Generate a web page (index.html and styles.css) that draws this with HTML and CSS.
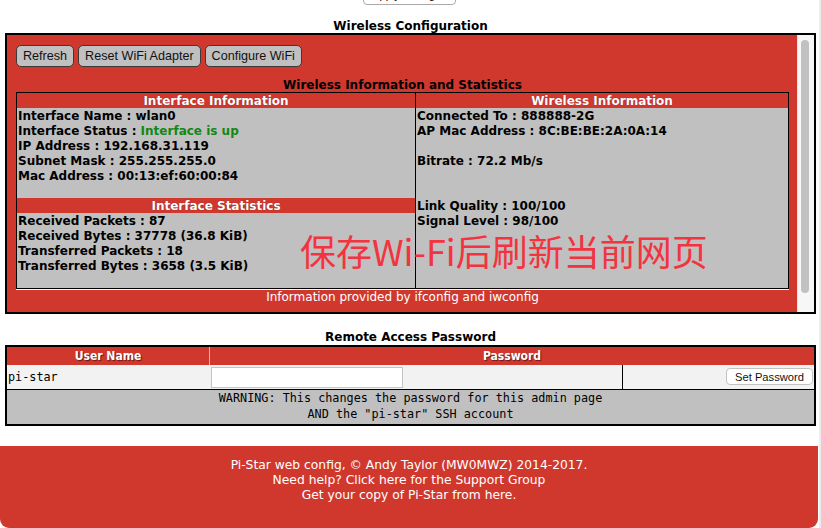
FILE: index.html
```html
<!DOCTYPE html>
<html lang="en">
<head>
<meta charset="utf-8">
<title>Pi-Star Wireless Configuration</title>
<link rel="stylesheet" href="styles.css">
</head>
<body>
<div class="page">
  <div class="apply-wrap"><button class="apply">Apply Changes</button></div>
  <h2 class="section-title">Wireless Configuration</h2>
  <div class="frame">
    <div class="frame-body">
      <div class="btn-row">
        <button class="gbtn">Refresh</button>
        <button class="gbtn">Reset WiFi Adapter</button>
        <button class="gbtn">Configure WiFi</button>
      </div>
      <div class="info-title">Wireless Information and Statistics</div>
      <div class="info-table">
        <div class="col">
          <div class="hdr">Interface Information</div>
          <div class="ln">Interface Name : wlan0</div>
          <div class="ln">Interface Status : <span class="ok">Interface is up</span></div>
          <div class="ln">IP Address : 192.168.31.119</div>
          <div class="ln">Subnet Mask : 255.255.255.0</div>
          <div class="ln">Mac Address : 00:13:ef:60:00:84</div>
          <div class="ln"></div>
          <div class="hdr">Interface Statistics</div>
          <div class="ln">Received Packets : 87</div>
          <div class="ln">Received Bytes : 37778 (36.8 KiB)</div>
          <div class="ln">Transferred Packets : 18</div>
          <div class="ln">Transferred Bytes : 3658 (3.5 KiB)</div>
          <div class="ln"></div>
        </div>
        <div class="col col-right">
          <div class="hdr">Wireless Information</div>
          <div class="ln">Connected To : 888888-2G</div>
          <div class="ln">AP Mac Address : 8C:BE:BE:2A:0A:14</div>
          <div class="ln"></div>
          <div class="ln">Bitrate : 72.2 Mb/s</div>
          <div class="ln"></div>
          <div class="ln"></div>
          <div class="ln">Link Quality : 100/100</div>
          <div class="ln">Signal Level : 98/100</div>
        </div>
      </div>
      <div class="info-note">Information provided by ifconfig and iwconfig</div>
    </div>
    <div class="scrollbar"><div class="thumb"></div></div>
  </div>

  <h2 class="section-title second">Remote Access Password</h2>
  <div class="pw-table">
    <div class="pw-head">
      <div class="pw-user">User Name</div>
      <div class="pw-pass">Password</div>
    </div>
    <div class="pw-row">
      <div class="pw-name">pi-star</div>
      <div class="pw-input-cell"><input class="pw-input" type="password"></div>
      <div class="pw-btn-cell"><button class="set-btn">Set Password</button></div>
    </div>
    <div class="pw-warn">WARNING: This changes the password for this admin page<br>AND the "pi-star" SSH account</div>
  </div>

  <div class="footer">
    <div>Pi-Star web config, © Andy Taylor (MW0MWZ) 2014-2017.</div>
    <div>Need help? Click <a href="#">here for the Support Group</a></div>
    <div>Get your copy of Pi-Star from <a href="#">here</a>.</div>
  </div>
</div>
<div class="overlay-note">保存Wi-Fi后刷新当前网页</div>
<div class="page-scroll"></div>
</body>
</html>
```

FILE: styles.css
```css
* { box-sizing: border-box; }
html, body { margin: 0; padding: 0; background: #fff; }
body {
  position: relative;
  width: 821px;
  height: 528px;
  overflow: hidden;
  font-family: "DejaVu Sans", Verdana, sans-serif;
  font-size: 12px;
  color: #000;
}
.page { width: 821px; }

.apply-wrap {
  height: 5px;
  overflow: hidden;
  display: flex;
  justify-content: center;
  align-items: flex-end;
}
.apply {
  flex: none;
  width: 93px;
  height: 20px;
  border: 1px solid #aaa;
  border-radius: 4px;
  background: #fff;
  font: 11px "Liberation Sans", Arial, sans-serif;
  margin-left: -2px;
}

.section-title {
  margin: 0;
  padding-top: 15px;
  line-height: 13px;
  height: 28px;
  font-size: 12px;
  font-weight: bold;
  text-align: center;
}
.section-title.second { padding-top: 16px; height: 31px; line-height: 15px; }

.frame {
  margin: 0 5px;
  height: 281px;
  border: 2px solid #000;
  display: flex;
}
.frame-body {
  width: 790px;
  flex: none;
  background: #d0382e;
  padding: 10px 8px 0 9px;
  overflow: hidden;
}
.scrollbar {
  flex: 1;
  background: #f7f7f7;
  border-left: 1px solid #e4e4e4;
  padding: 5px 0 0 3px;
}
.thumb {
  width: 8px;
  height: 253px;
  border-radius: 4px;
  background: #c1c1c1;
}

.btn-row { display: flex; gap: 4px; height: 22px; }
.gbtn {
  height: 22px;
  padding: 0 6px;
  border: 1px solid #3a3a3a;
  border-radius: 5px;
  background: #c0c0c0;
  color: #111;
  font: 12.6px "Liberation Sans", Arial, sans-serif;
}

.info-title {
  margin-top: 10px;
  line-height: 15px;
  padding-top: 1px;
  height: 15px;
  text-align: center;
  font-weight: bold;
}
.info-table {
  width: 773px;
  border: 1px solid #000;
  display: grid;
  grid-template-columns: 398px 373px;
  background: #c0c0c0;
  box-shadow: 0 1px 0 #fff;
}
.col-right { border-left: 1px solid #000; }
.hdr {
  height: 15px;
  line-height: 15px;
  padding-top: 1px;
  background: #d0382e;
  color: #fff;
  font-weight: bold;
  text-align: center;
  text-shadow: 0 0 1px rgba(0,0,0,.45);
}
.ln {
  height: 15px;
  line-height: 15px;
  padding-top: 1px;
  padding-left: 1px;
  font-weight: bold;
  white-space: nowrap;
}
.ok { color: #118811; }
.info-note {
  line-height: 15px;
  padding-top: 1px;
  text-align: center;
  color: #fff;
}

.pw-table {
  margin: 0 5px;
  border: 2px solid #000;
}
.pw-head {
  display: flex;
  height: 18px;
  line-height: 18px;
  background: #d0382e;
  color: #fff;
  font-family: "DejaVu Sans Condensed", "DejaVu Sans", sans-serif;
  font-weight: bold;
  text-shadow: 1px 1px 1px rgba(0,0,0,.55);
}
.pw-user { width: 203px; text-align: center; border-right: 1px solid #e9b5b0; }
.pw-pass { flex: 1; text-align: center; }
.pw-row {
  display: flex;
  height: 25px;
  background: #f2f2f2;
  border-bottom: 1px solid #000;
}
.pw-name {
  width: 203px;
  padding-left: 1px;
  font: 11.8px/24px "DejaVu Sans Mono", monospace;
}
.pw-input-cell {
  width: 413px;
  border-right: 1px solid #000;
  padding: 2px 0 0 1px;
}
.pw-input {
  display: block;
  width: 192px;
  height: 21px;
  margin: 0;
  border: 1px solid #c4c4c4;
  background: #fff;
}
.pw-btn-cell {
  flex: 1;
  display: flex;
  justify-content: flex-end;
  padding: 3px 1px 0 0;
}
.set-btn {
  width: 87px;
  height: 17px;
  padding: 0;
  border: 1px solid #c2c2c2;
  border-radius: 4px;
  background: #fff;
  color: #111;
  font: 11.2px "Liberation Sans", Arial, sans-serif;
}
.pw-warn {
  height: 34px;
  background: #c0c0c0;
  text-align: center;
  font: 11.8px/16px "DejaVu Sans Mono", monospace;
}

.footer {
  margin-top: 20px;
  width: 818px;
  height: 82px;
  padding-top: 12px;
  background: #d0382e;
  border-radius: 0 0 9px 9px;
  color: #fff;
  font-size: 12.3px;
  text-align: center;
  line-height: 15px;
}
.footer a { color: #fff; text-decoration: none; }

.overlay-note {
  position: absolute;
  left: 300px;
  top: 232px;
  font-family: "Noto Sans CJK SC", sans-serif;
  font-size: 36px;
  line-height: 1;
  color: #f3333f;
  white-space: nowrap;
}
.page-scroll {
  position: absolute;
  top: 0;
  right: 0;
  width: 2px;
  height: 528px;
  background: #ececec;
}
```
